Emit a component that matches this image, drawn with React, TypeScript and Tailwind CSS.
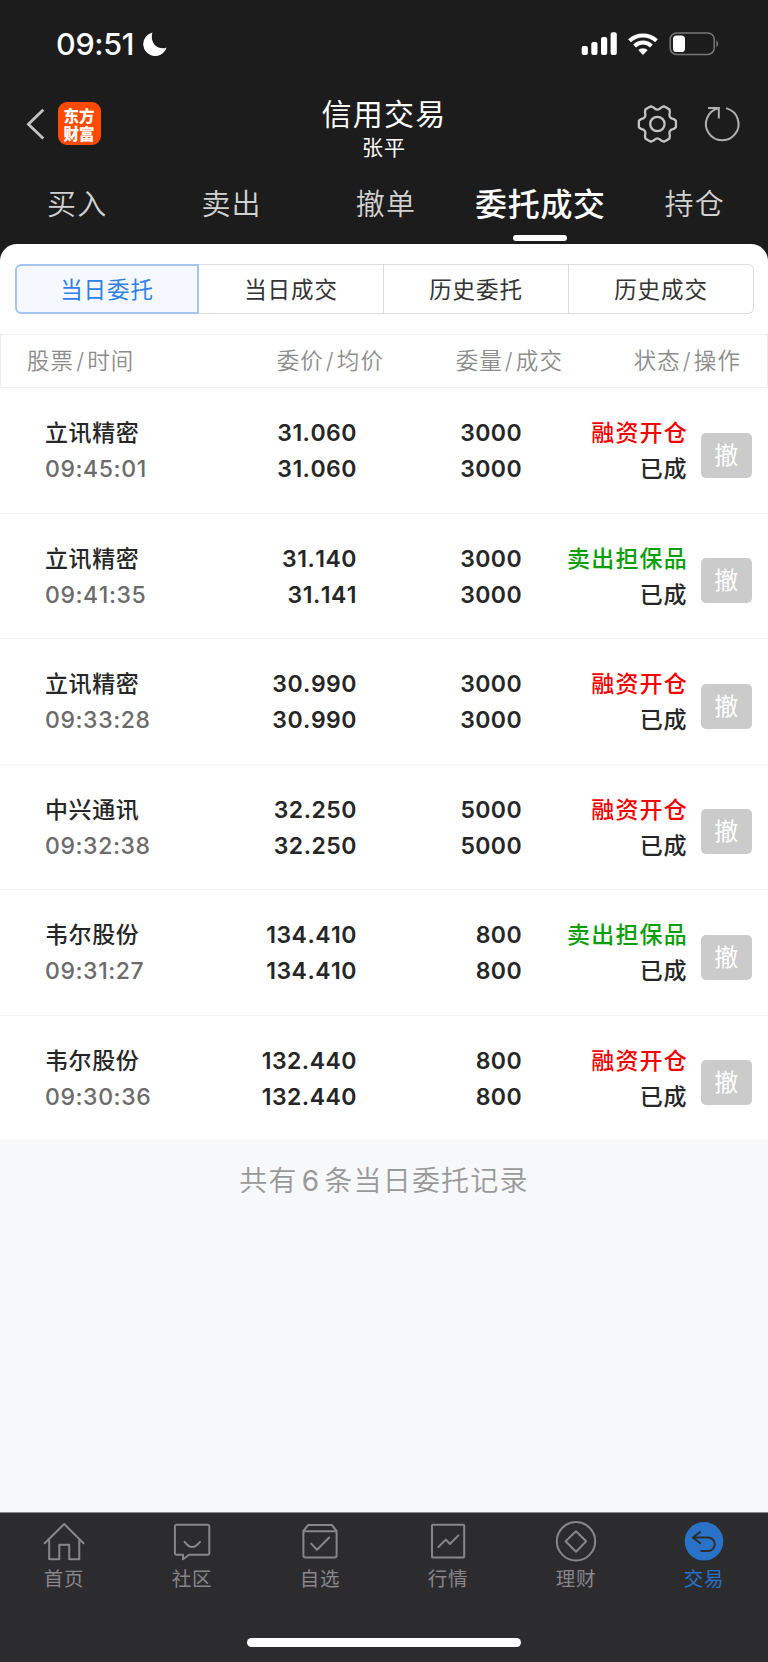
import React, { useState } from 'react';

interface Order {
  name: string;
  time: string;
  price: string;
  avgPrice: string;
  amount: string;
  dealt: string;
  type: 'buy' | 'sell';
}

const MAIN_TABS = ['买入', '卖出', '撤单', '委托成交', '持仓'];
const SUB_TABS = ['当日委托', '当日成交', '历史委托', '历史成交'];

const ORDERS: Order[] = [
  { name: '立讯精密', time: '09:45:01', price: '31.060', avgPrice: '31.060', amount: '3000', dealt: '3000', type: 'buy' },
  { name: '立讯精密', time: '09:41:35', price: '31.140', avgPrice: '31.141', amount: '3000', dealt: '3000', type: 'sell' },
  { name: '立讯精密', time: '09:33:28', price: '30.990', avgPrice: '30.990', amount: '3000', dealt: '3000', type: 'buy' },
  { name: '中兴通讯', time: '09:32:38', price: '32.250', avgPrice: '32.250', amount: '5000', dealt: '5000', type: 'buy' },
  { name: '韦尔股份', time: '09:31:27', price: '134.410', avgPrice: '134.410', amount: '800', dealt: '800', type: 'sell' },
  { name: '韦尔股份', time: '09:30:36', price: '132.440', avgPrice: '132.440', amount: '800', dealt: '800', type: 'buy' },
];

// Six-lobed gear outline, centred on 0,0
function gearPath() {
  const point = (deg: number, r: number) => {
    const a = (deg * Math.PI) / 180;
    return `${(r * Math.cos(a)).toFixed(2)} ${(r * Math.sin(a)).toFixed(2)}`;
  };
  let d = `M${point(-10, 18.8)}`;
  for (let lobe = 0; lobe < 360; lobe += 60) {
    d += `Q${point(lobe, 18.6)} ${point(lobe + 10, 18.8)}`;
    d += `L${point(lobe + 17, 17)}`;
    d += `Q${point(lobe + 30, 12.2)} ${point(lobe + 43, 17)}`;
    d += `L${point(lobe + 50, 18.8)}`;
  }
  return `${d}Z`;
}

function StatusBar() {
  return (
    <div className="flex h-[88px] items-center justify-between pl-14 pr-12">
      <div className="flex items-center">
        <span className="text-[30.5px] leading-none font-[550] tracking-[-0.3px] text-white">09:51</span>
        <svg className="ml-[9px] h-6 w-6" viewBox="0 0 24 24" fill="white">
          <path d="M9.4.4A12 12 0 1 0 23.7 15.4C16 18.8 6.2 12 9.4.4z" />
        </svg>
      </div>
      <svg className="h-6 w-[140px]" viewBox="580 32 140 24" fill="white">
        <rect x="581.7" y="46" width="6.2" height="9" rx="2" />
        <rect x="591.3" y="42" width="6.2" height="13" rx="2" />
        <rect x="601" y="37" width="6.2" height="18" rx="2" />
        <rect x="610.6" y="32.3" width="6.2" height="22.7" rx="2" />
        <g fill="none" stroke="white" strokeWidth="4">
          <path d="M629.5 40.8a19.6 19.6 0 0 1 27 0" />
          <path d="M634.6 46a12 12 0 0 1 16.8 0" />
        </g>
        <path d="M643 55l-4.7-4.9a6.8 6.8 0 0 1 9.4 0z" />
        <rect x="670.2" y="32.9" width="44" height="21.6" rx="6.5" fill="none" stroke="#77777a" strokeWidth="1.5" />
        <rect x="673" y="35.4" width="12" height="16.6" rx="3.6" />
        <path d="M716.3 40.3a4 4 0 0 1 0 6.8z" fill="#77777a" />
      </svg>
    </div>
  );
}

function TitleBar() {
  return (
    <div className="grid h-[82px] grid-cols-[1fr_auto_1fr] items-start">
      <div className="flex items-center pl-[25px] pt-[14px]">
        <svg className="h-8 w-5" viewBox="0 0 20 32" fill="none" stroke="#c4c4c4" strokeWidth="2.8">
          <path d="M18.3 1.8L3.4 16.3L18.3 30.4" />
        </svg>
        <div className="ml-[12.5px] flex h-[43px] w-[43px] flex-col items-center justify-center rounded-[9px] bg-[#ff4b00] font-['Noto_Sans_CJK_SC',sans-serif] text-[15.5px] leading-[18px] font-black text-white">
          <span>东方</span>
          <span>财富</span>
        </div>
      </div>
      <div className="flex flex-col items-center pt-[6px] text-white">
        <h1 className="text-[30px] leading-[40px] font-normal tracking-[1.2px]">信用交易</h1>
        <span className="text-[21px] leading-[27px] tracking-[0.9px]">张平</span>
      </div>
      <div className="flex justify-end pr-[26px] pt-4">
        <svg className="h-10 w-[106px]" viewBox="636 104 106 40" fill="none" stroke="#c4c4c4" strokeWidth="2.3">
          <g transform="translate(657.4 124)">
            <path d={gearPath()} strokeLinejoin="round" />
            <circle r="7.2" />
          </g>
          <g stroke="#b0b0b0" strokeWidth="2">
            <path d="M726.8 108.4A16.3 16.3 0 1 1 718.4 108.2" strokeLinecap="round" />
            <path d="M708 108H718.8V118.6" />
          </g>
        </svg>
      </div>
    </div>
  );
}

interface HeadingProps {
  left: string;
  right: string;
  className: string;
}

function Heading({ left, right, className }: HeadingProps) {
  return (
    <span className={className}>
      {left}
      <span className="mx-[2px]">/</span>
      {right}
    </span>
  );
}

interface OrderRowProps {
  order: Order;
}

function OrderRow({ order }: OrderRowProps) {
  return (
    <li className="flex h-[125.5px] border-b border-[#f4f4f5] bg-white pt-[27px] pr-4 text-[23px] leading-9 font-medium tracking-[0.6px] text-[#262626] [font-kerning:none]">
      <div className="flex w-[190px] flex-col pl-[45px]">
        <span>{order.name}</span>
        <span className="text-[#6b6b6b]">{order.time}</span>
      </div>
      <div className="flex w-[167px] flex-col text-right font-semibold tracking-[0.5px]">
        <span>{order.price}</span>
        <span>{order.avgPrice}</span>
      </div>
      <div className="flex w-[165px] flex-col text-right font-semibold tracking-[0.4px]">
        <span>{order.amount}</span>
        <span>{order.dealt}</span>
      </div>
      <div className="flex w-[165px] flex-col text-right">
        <span className={order.type === 'buy' ? '-mr-px text-[#f40000] tracking-[1.2px]' : '-mr-px text-[#0a9f0a] tracking-[1.2px]'}>
          {order.type === 'buy' ? '融资开仓' : '卖出担保品'}
        </span>
        <span>已成</span>
      </div>
      <button className="mt-[17.5px] ml-auto h-[45px] w-[51px] rounded-[5px] bg-[#cbcbcb] text-2xl leading-[45px] font-normal text-white">
        撤
      </button>
    </li>
  );
}

const NAV_ITEMS: { label: string; icon: React.ReactNode }[] = [
  {
    label: '首页',
    icon: <path d="M2.7 23.2L22.2 4L41.5 23.2M7.2 19.5V39.3H17.3V24.7H27.2V39.3H37.3V19.5" />,
  },
  {
    label: '社区',
    icon: (
      <>
        <path d="M6.5 4.8H37.5a1.8 1.8 0 0 1 1.8 1.8V33a1.8 1.8 0 0 1-1.8 1.8H19.2L13 39.3V34.8H6.5A1.8 1.8 0 0 1 4.9 33V6.6A1.8 1.8 0 0 1 6.5 4.8z" />
        <path d="M14.6 21.8Q22.2 32 30 21.8" />
      </>
    ),
  },
  {
    label: '自选',
    icon: (
      <>
        <path d="M5.4 10.8L10.2 5H33.8L38.6 10.8V35.4a2 2 0 0 1-2 2H7.4a2 2 0 0 1-2-2zM5.4 11.2H38.6" />
        <path d="M13.2 23.6L19 29.8L31.2 17.5" />
      </>
    ),
  },
  {
    label: '行情',
    icon: (
      <>
        <rect x="6" y="4.8" width="32.2" height="32.6" rx="1" />
        <path d="M12.4 27L19.8 19.6L24 24L32.4 15.4" />
      </>
    ),
  },
  {
    label: '理财',
    icon: (
      <>
        <circle cx="22" cy="21.3" r="19.2" />
        <path d="M22 11.2L32.2 21.3L22 31.7L11.6 21.3z" />
      </>
    ),
  },
  {
    label: '交易',
    icon: (
      <>
        <circle cx="22" cy="21.3" r="19.3" fill="#2a72c8" stroke="none" />
        <path stroke="#2c2c2e" strokeWidth="2" d="M18.2 12L10.8 17.5L18.2 23.2M10.8 17.5H26a6.8 6.8 0 0 1 0 13.6H19.2" />
      </>
    ),
  },
];

function BottomNav() {
  return (
    <nav className="flex h-[150px] flex-col items-center justify-between border-t border-[#8a8a8c] bg-[#2c2c2e]">
      <div className="grid w-full grid-cols-6 pt-[7px]">
        {NAV_ITEMS.map((item) => {
          const active = item.label === '交易';
          return (
            <button key={item.label} className={`flex flex-col items-center ${active ? 'text-[#2a72c8]' : 'text-[#87868b]'}`}>
              <svg
                className="h-11 w-11"
                viewBox="0 0 44 44"
                fill="none"
                stroke="currentColor"
                strokeWidth="2"
                strokeLinecap="round"
                strokeLinejoin="round"
              >
                {item.icon}
              </svg>
              <span className="mt-px text-[19.5px] leading-7 tracking-[0.7px]">{item.label}</span>
            </button>
          );
        })}
      </div>
      <div className="mb-[15px] h-[9px] w-[274px] rounded-full bg-white" />
    </nav>
  );
}

export default function App() {
  const [mainTab, setMainTab] = useState('委托成交');
  const [subTab, setSubTab] = useState('当日委托');

  return (
    <div className="flex h-[1662px] w-[768px] flex-col overflow-hidden bg-[#f7f8fa] font-['Inter','Noto_Sans_CJK_SC',sans-serif]">
      <header className="bg-[#1c1c1c]">
        <StatusBar />
        <TitleBar />

        {/* Main tabs */}
        <div className="grid h-[74px] w-[772px] grid-cols-5">
          {MAIN_TABS.map((tab) => {
            const active = tab === mainTab;
            return (
              <button
                key={tab}
                onClick={() => setMainTab(tab)}
                className={`flex flex-col items-center whitespace-nowrap pt-[11px] leading-[48px] ${
                  active ? 'text-[32px] font-medium tracking-[0.7px] text-white' : 'text-[29px] font-[350] tracking-[1.2px] text-[#d2d2d2]'
                }`}
              >
                {tab}
                {active && <span className="mt-[6px] h-[6px] w-[54px] rounded-full bg-white" />}
              </button>
            );
          })}
        </div>

        {/* Sub tabs */}
        <div className="h-[90px] rounded-t-[17px] bg-white px-[15px] pt-5">
          <div className="grid h-[50px] w-[739px] grid-cols-[184px_185px_185px_185px]">
            {SUB_TABS.map((tab) => (
              <button
                key={tab}
                onClick={() => setSubTab(tab)}
                className={`border pt-px text-[22.5px] tracking-[0.9px] first:rounded-l-md last:rounded-r-md not-first:border-l-0 ${
                  tab === subTab ? 'border-[#a5c5f0] border-2 bg-[#f5f9ff] text-[#2f80e7]' : 'border-[#dcdde3] text-[#333333]'
                }`}
              >
                {tab}
              </button>
            ))}
          </div>
        </div>
      </header>

      {/* Column headings */}
      <div className="flex h-[54px] items-center border border-[#eeeeee] bg-white text-[22.5px] font-[350] tracking-[1.1px] text-[#8c8c8c]">
        <Heading className="w-[190px] pl-[26px]" left="股票" right="时间" />
        <Heading className="w-[193px] text-right" left="委价" right="均价" />
        <Heading className="w-[179px] text-right" left="委量" right="成交" />
        <Heading className="w-[178px] text-right" left="状态" right="操作" />
      </div>

      <ul>
        {ORDERS.map((order) => (
          <OrderRow key={order.time} order={order} />
        ))}
      </ul>

      <p className="grow pt-5 text-center text-[28px] leading-10 font-[350] tracking-[1.2px] text-[#999999]">
        共有<span className="mx-1 font-normal">6</span>条当日委托记录
      </p>

      <BottomNav />
    </div>
  );
}
